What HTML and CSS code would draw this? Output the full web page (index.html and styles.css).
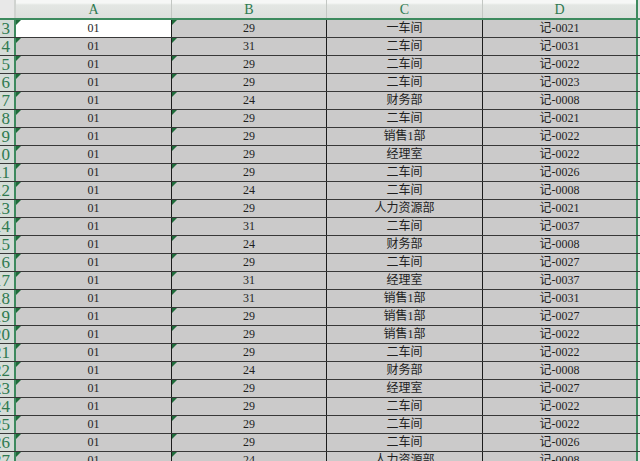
FILE: index.html
```html
<!DOCTYPE html>
<html lang="zh">
<head>
<meta charset="utf-8">
<link rel="stylesheet" href="styles.css">
</head>
<body>
<div class="sheet" id="sheet">
  <div class="row head">
    <div class="corner"></div>
    <div class="ch ca">A</div>
    <div class="ch cb">B</div>
    <div class="ch cc">C</div>
    <div class="ch cd">D</div>
    <div class="ch tail"></div>
  </div>
</div>
<script src="app.js"></script>
</body>
</html>
```
FILE: app.js
```js
const data = [
  ["29","一车间","记-0021"],
  ["31","二车间","记-0031"],
  ["29","二车间","记-0022"],
  ["29","二车间","记-0023"],
  ["24","财务部","记-0008"],
  ["29","二车间","记-0021"],
  ["29","销售1部","记-0022"],
  ["29","经理室","记-0022"],
  ["29","二车间","记-0026"],
  ["24","二车间","记-0008"],
  ["29","人力资源部","记-0021"],
  ["31","二车间","记-0037"],
  ["24","财务部","记-0008"],
  ["29","二车间","记-0027"],
  ["31","经理室","记-0037"],
  ["31","销售1部","记-0031"],
  ["29","销售1部","记-0027"],
  ["29","销售1部","记-0022"],
  ["29","二车间","记-0022"],
  ["24","财务部","记-0008"],
  ["29","经理室","记-0027"],
  ["29","二车间","记-0022"],
  ["29","二车间","记-0022"],
  ["29","二车间","记-0026"],
  ["24","人力资源部","记-0008"]
];
const sheet = document.getElementById("sheet");
data.forEach((r, i) => {
  const row = document.createElement("div");
  row.className = "row";
  row.innerHTML =
    '<div class="rh"><span>' + (i + 3) + '</span></div>' +
    '<div class="c ca tri' + (i === 0 ? ' active' : '') + '">01</div>' +
    '<div class="c cb tri">' + r[0] + '</div>' +
    '<div class="c cc">' + r[1] + '</div>' +
    '<div class="c cd">' + r[2] + '</div>' +
    '<div class="tail"></div>';
  sheet.appendChild(row);
});
```
FILE: styles.css
```css
html, body {
  margin: 0;
  padding: 0;
  background: #e4e4e4;
  overflow: hidden;
}
.sheet {
  width: 640px;
  height: 461px;
  overflow: hidden;
  display: flex;
  flex-direction: column;
}
.row {
  display: flex;
  height: 17px;
  border-bottom: 1px solid #383838;
  flex-shrink: 0;
}
.row.head {
  height: 18px;
  border-bottom: 2px solid #3d8a5e;
  background: linear-gradient(#f6f7f6 0, #f6f7f6 3px, #e3e6e3 5px, #dde0dd 100%);
}
.corner {
  width: 14px;
  flex-shrink: 0;
  border-right: 2px solid #d0d3d0;
  background: #e8e8e8;
}
.ch {
  display: flex;
  align-items: flex-end;
  justify-content: center;
  font-family: "Liberation Serif", serif;
  font-size: 14px;
  line-height: 16px;
  color: #2f7a50;
  border-right: 1px solid #c3c7c3;
  flex-shrink: 0;
}
.ca { width: 155px; }
.cb { width: 154px; }
.cc { width: 155px; }
.cd { width: 153px; }
.ch.cd { border-right: 2px solid #3d8a5e; }
.ch.tail { border-right: none; }
.tail {
  flex: 1;
  background: #e4e4e4;
}
.rh {
  width: 16px;
  box-sizing: border-box;
  flex-shrink: 0;
  border-right: 2px solid #3d8a5e;
  background: #d4dcd7;
  display: flex;
  justify-content: flex-end;
  align-items: center;
  overflow: hidden;
  font-family: "Liberation Serif", serif;
  font-size: 17px;
  line-height: 17px;
  color: #2f7a50;
  padding-right: 4px;
}
.rh span {
  white-space: nowrap;
  flex-shrink: 0;
  line-height: 17px;
}
.c {
  position: relative;
  flex-shrink: 0;
  background: #cbcaca;
  border-right: 1px solid #1c1c1c;
  display: flex;
  align-items: center;
  justify-content: center;
  font-family: "Liberation Serif", "Noto Sans CJK SC", serif;
  font-size: 12px;
  line-height: 17px;
  color: #1e1e1e;
  white-space: nowrap;
}
.c.cd {
  border-right: 2px solid #3d8a5e;
}
.c.active {
  background: #ffffff;
}
.tri::before {
  content: "";
  position: absolute;
  left: 0;
  top: 0;
  border-top: 5px solid #1f6b3a;
  border-right: 5px solid transparent;
}
```
